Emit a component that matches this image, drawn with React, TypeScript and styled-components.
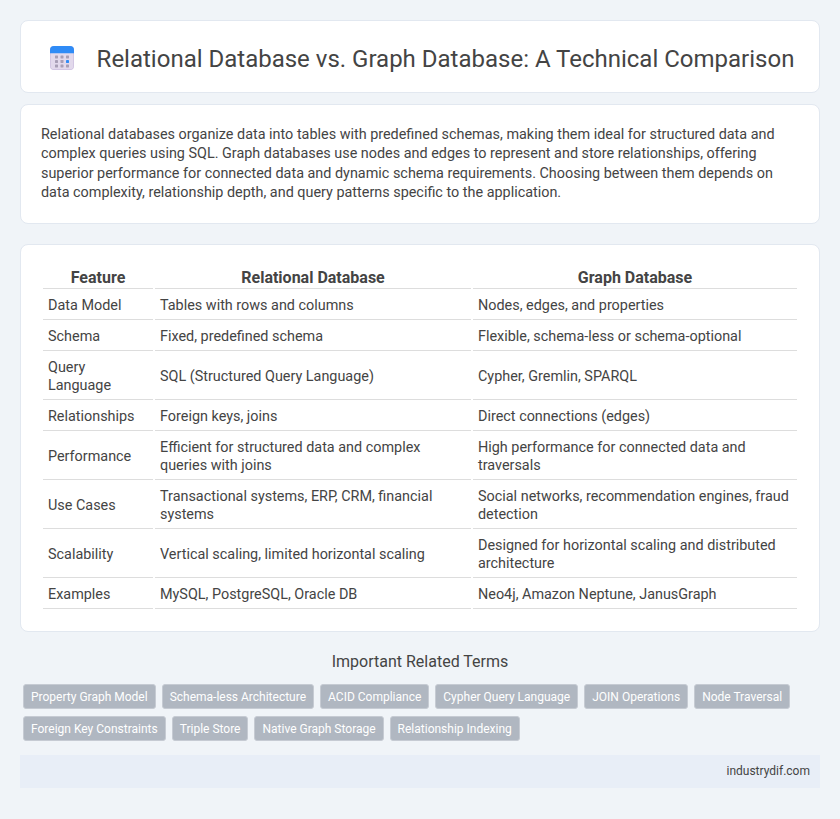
import React from "react";
import styled, { createGlobalStyle } from "styled-components";

const Global = createGlobalStyle`
  html, body { margin: 0; padding: 0; }
  body { background: #f0f4f8; font-family: Roboto, "Liberation Sans", sans-serif; color: #444; }
`;
const Page = styled.div`
  padding: 20px 20px 30px;
  display: flex;
  flex-direction: column;
`;
const Card = styled.section<{ $gap: number }>`
  background: #fff;
  border: 1px solid #e2e8f0;
  border-radius: 8px;
  margin-bottom: ${(p) => p.$gap}px;
`;
const Header = styled(Card)`
  display: flex;
  align-items: center;
  justify-content: center;
  gap: 23px;
  height: 73px;
  box-sizing: border-box;
  padding: 3px 0 0 4px;
`;
const Title = styled.h1`
  margin: 0;
  padding-top: 2px;
  font-size: 24px;
  font-weight: 400;
  color: #444;
`;
const Intro = styled(Card)`
  padding: 20px;
  font-size: 14.4px;
  line-height: 19.44px;
  color: #444;
`;
const Para = styled.p`
  margin: 0;
`;
const TableCard = styled(Card)`
  padding: 20px;
`;
const Table = styled.table`
  width: 100%;
  table-layout: fixed;
  border-collapse: separate;
  border-spacing: 2px;
  font-size: 14.4px;
  line-height: 18px;
`;
const Th = styled.th<{ $w: number }>`
  box-sizing: border-box;
  width: ${(p) => p.$w}px;
  font-size: 16px;
  font-weight: 700;
  padding: 1px 5px 1px;
  line-height: 19px;
  border-bottom: 1px solid #ddd;
  text-align: center;
`;
const Td = styled.td`
  padding: 6px 5px 4px;
  border-bottom: 1px solid #ddd;
  text-align: left;
`;
const TermsTitle = styled.h2`
  margin: 0 0 13px;
  font-size: 16px;
  font-weight: 400;
  line-height: 19px;
  text-align: center;
  color: #444;
`;
const Tags = styled.div`
  display: flex;
  flex-wrap: wrap;
  gap: 7px 6px;
  padding: 0 3px;
  margin-bottom: 14px;
`;
const Tag = styled.span`
  box-sizing: border-box;
  height: 25px;
  line-height: 23px;
  padding: 1px 7px 0;
  font-size: 12px;
  font-weight: 400;
  background: #b0b7c1;
  color: #fff;
  border: 1px solid #c6cbd3;
  border-radius: 3px;
`;
const Footer = styled.footer`
  height: 33px;
  background: #e8eef7;
  display: flex;
  align-items: center;
  justify-content: flex-end;
  padding: 0 10px;
  font-size: 12px;
  color: #444;
`;

const CalendarIcon = () => (
  <svg width="24" height="24" viewBox="0 0 24 24" aria-hidden="true">
    <rect x="0" y="0" width="24" height="24" rx="4" fill="#cdbfe0" />
    <rect x="0.7" y="5" width="22.6" height="18.3" rx="3" fill="#e2d9ec" />
    <path d="M0 7.3V4a4 4 0 0 1 4-4h16a4 4 0 0 1 4 4v3.3z" fill="#2f8bf6" />
    {[9.5, 14, 18.5].map((y) =>
      [5, 10.5, 16].map((x) => (
        <rect
          key={`${x}-${y}`}
          x={x}
          y={y}
          width="3"
          height="3"
          rx="0.4"
          fill={x === 16 && y === 14 ? "#2f8bf6" : "#a89fb6"}
        />
      ))
    )}
  </svg>
);

const rows: [string, string, string][] = [
  ["Data Model", "Tables with rows and columns", "Nodes, edges, and properties"],
  ["Schema", "Fixed, predefined schema", "Flexible, schema-less or schema-optional"],
  ["Query Language", "SQL (Structured Query Language)", "Cypher, Gremlin, SPARQL"],
  ["Relationships", "Foreign keys, joins", "Direct connections (edges)"],
  ["Performance", "Efficient for structured data and complex queries with joins", "High performance for connected data and traversals"],
  ["Use Cases", "Transactional systems, ERP, CRM, financial systems", "Social networks, recommendation engines, fraud detection"],
  ["Scalability", "Vertical scaling, limited horizontal scaling", "Designed for horizontal scaling and distributed architecture"],
  ["Examples", "MySQL, PostgreSQL, Oracle DB", "Neo4j, Amazon Neptune, JanusGraph"],
];
const terms = [
  "Property Graph Model",
  "Schema-less Architecture",
  "ACID Compliance",
  "Cypher Query Language",
  "JOIN Operations",
  "Node Traversal",
  "Foreign Key Constraints",
  "Triple Store",
  "Native Graph Storage",
  "Relationship Indexing",
];

export default function App() {
  return (
    <Page>
      <Global />
      <Header $gap={11}>
        <CalendarIcon />
        <Title>Relational Database vs. Graph Database: A Technical Comparison</Title>
      </Header>
      <Intro $gap={20}>
        <Para>
          Relational databases organize data into tables with predefined schemas, making them ideal for structured data and complex queries using SQL. Graph databases use nodes and edges to represent and store relationships, offering superior performance for connected data and dynamic schema requirements. Choosing between them depends on data complexity, relationship depth, and query patterns specific to the application.
        </Para>
      </Intro>
      <TableCard $gap={20}>
        <Table>
          <thead>
            <tr>
              <Th $w={110}>Feature</Th>
              <Th $w={316}>Relational Database</Th>
              <Th $w={324}>Graph Database</Th>
            </tr>
          </thead>
          <tbody>
            {rows.map((r) => (
              <tr key={r[0]}>
                <Td>{r[0]}</Td>
                <Td>{r[1]}</Td>
                <Td>{r[2]}</Td>
              </tr>
            ))}
          </tbody>
        </Table>
      </TableCard>
      <TermsTitle>Important Related Terms</TermsTitle>
      <Tags>
        {terms.map((t) => (
          <Tag key={t}>{t}</Tag>
        ))}
      </Tags>
      <Footer>industrydif.com</Footer>
    </Page>
  );
}
